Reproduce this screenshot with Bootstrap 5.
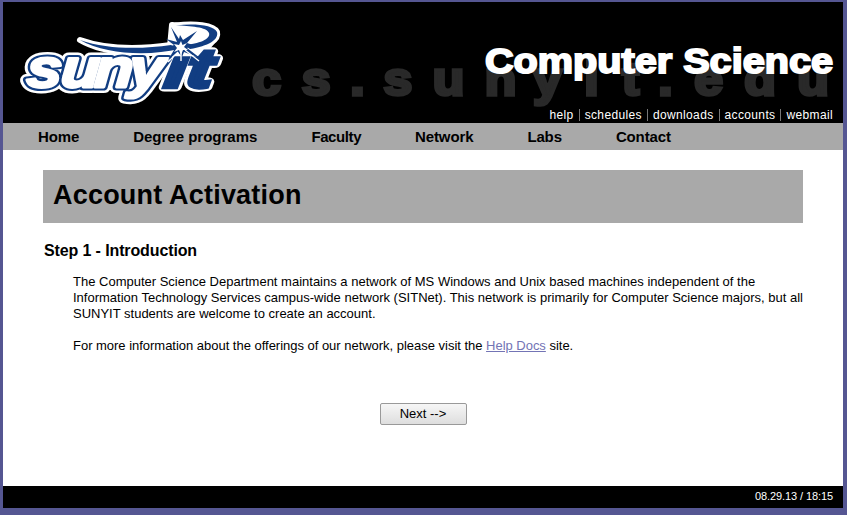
<!DOCTYPE html>
<html lang="en">
<head>
<meta charset="utf-8">
<meta name="viewport" content="width=device-width, initial-scale=1">
<title>Account Activation</title>
<link href="https://cdn.jsdelivr.net/npm/bootstrap@5.3.0/dist/css/bootstrap.min.css" rel="stylesheet">
<style>
body{background:#555692;font-family:"Liberation Sans",Arial,sans-serif;color:#000;padding:2px 4px 7px 3px;height:515px;overflow:hidden}
.site{height:506px;background:#fff}
.masthead{height:121px;background:#000}
.masthead svg{display:block}
.masthead .banner{height:105px}
.toplinks{height:16px;font-size:12px;line-height:17px;padding-right:10px;color:#777}
.toplinks a{color:#fff;text-decoration:none;letter-spacing:.36px}
.toplinks a+a{border-left:1px solid #777;margin-left:5px;padding-left:5px;line-height:12px}
.mainnav{height:27px;background:#a9a9a9;padding-left:35px;gap:54px}
.mainnav a{color:#000;font-size:15px;font-weight:700;line-height:27px;text-decoration:none;letter-spacing:-.13px;white-space:nowrap}
.mainnav a:nth-child(2){letter-spacing:0}
.mainnav a:nth-child(3){letter-spacing:-.4px}
.titlebar{margin:20px 40px 0;height:53px;background:#a9a9a9;padding-left:10px}
.titlebar h1{font-size:27px;line-height:51px;font-weight:700;letter-spacing:.2px}
.step{margin:18px 0 0 41px;font-size:16px;line-height:20px;font-weight:700;letter-spacing:-.12px}
.copy{margin:13px 0 0 70px;font-size:13px;line-height:16px;white-space:nowrap}
.copy p{margin-bottom:16px}
.copy p+p{letter-spacing:-.02px}
.copy a{color:#7374b5}
.next-btn{width:87px;height:22px;margin-top:33px;padding:0;border:1px solid #999;border-radius:2px;background:linear-gradient(#f6f6f6,#dedede);font-size:13px;line-height:20px;color:#000}
.foot{height:22px;background:#000;color:#fff;font-size:11px;line-height:20px;padding-right:10px;letter-spacing:-.1px}
</style>
<script src="https://cdn.jsdelivr.net/npm/bootstrap@5.3.0/dist/js/bootstrap.bundle.min.js"></script>
</head>
<body>
<div class="site d-flex flex-column">
<header class="masthead">
<svg class="banner" width="840" height="105" viewBox="3 2 840 105" role="img" aria-label="SUNYIT Computer Science">
<defs>
<g id="letters" font-family="Liberation Sans, Arial, sans-serif" font-weight="700" font-style="italic" font-size="54" stroke-linejoin="round">
<text transform="translate(0 87) skewX(-3) scale(1.18 1)" x="22 51 79.5 109">suny</text>
</g>
<g id="lettersIt" font-family="Liberation Sans, Arial, sans-serif" font-weight="700" font-style="italic" font-size="54">
<text transform="translate(0 87) skewX(-7) scale(1.4 1)" x="117 132.5">ıt</text>
</g>
<path id="swoosh" d="M80 40 C108 50 143 49 171 45 L179 49 C150 56 106 55 80 40Z M176 25.5 C194 23 214 25 217 32 C219 40 208 46 190 49 L184 45 C199 44 211 39 209 33 C207 27 190 26 176 25.5Z"/>
</defs>
<g fill="#fff" stroke="#fff" stroke-linejoin="round">
<use href="#letters" stroke-width="12"/><use href="#lettersIt" stroke-width="9"/>
<use href="#swoosh" stroke-width="6"/>
<path stroke-width="6" d="M172 25 213 29 216 37 200 56H178L170 47Z"/>
</g>
<use href="#letters" fill="#fff" stroke="#113d82" stroke-width="7"/>
<use href="#letters" fill="#fff" stroke="#fff" stroke-width="2.8"/>
<use href="#lettersIt" fill="#113d82" stroke="#113d82" stroke-width="4.5"/>
<use href="#swoosh" fill="#113d82"/>
<path fill="#113d82" d="M171 27 179 39 180 35 183 40 197 31 187 43 193 45 187 48 200 58 184 52 182 57 178 52 168 60 174 50 167 48 174 45 166 39 177 42Z"/>
<path fill="#fff" d="M181 41 182.5 45 187 43 184 47 188 50 183 50 181 55 179 50 174 52 177 48 174 44 179 45Z"/>
<path stroke="#fff" stroke-width="1.4" d="M185 50 199 61M178 52 168 62M181 52V61"/>
<text transform="scale(1.1 1)" font-family="Liberation Sans, Arial, sans-serif" font-weight="700" font-size="47" fill="#292929" stroke="#292929" stroke-width="3.4" text-anchor="middle" y="95" x="242.3 287.3 325 361.8 407.7 455 497.7 537.7 573.2 605 644.1 690.9 739.1">cs.sunyit.edu</text>
<text font-family="Liberation Sans, Arial, sans-serif" font-weight="700" font-size="35" fill="#fff" stroke="#fff" stroke-width="1.9" x="485" y="73.4" textLength="348" lengthAdjust="spacingAndGlyphs">Computer Science</text>
</svg>
<div class="toplinks d-flex justify-content-end align-items-center"><a href="#">help</a><a href="#">schedules</a><a href="#">downloads</a><a href="#">accounts</a><a href="#">webmail</a></div>
</header>
<nav class="mainnav d-flex"><a href="#">Home</a><a href="#">Degree programs</a><a href="#">Faculty</a><a href="#">Network</a><a href="#">Labs</a><a href="#">Contact</a></nav>
<main class="flex-grow-1">
<div class="titlebar"><h1 class="m-0">Account Activation</h1></div>
<h2 class="step mb-0">Step 1 - Introduction</h2>
<div class="copy">
<p>The Computer Science Department maintains a network of MS Windows and Unix based machines independent of the<br>Information Technology Services campus-wide network (SITNet). This network is primarily for Computer Science majors, but all<br>SUNYIT students are welcome to create an account.</p>
<p>For more information about the offerings of our network, please visit the <a href="#">Help Docs</a> site.</p>
</div>
<div class="text-center"><button type="button" class="btn next-btn">Next --&gt;</button></div>
</main>
<footer class="foot text-end">08.29.13 / 18:15</footer>
</div>
</body>
</html>
